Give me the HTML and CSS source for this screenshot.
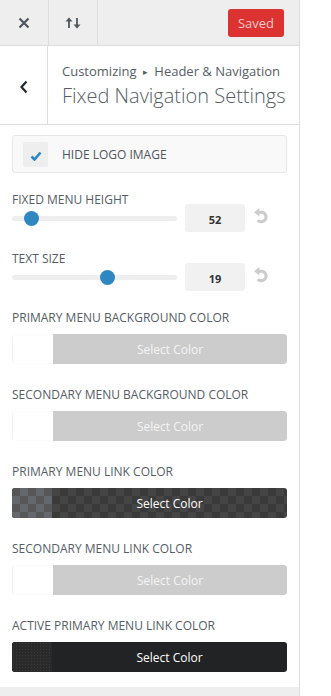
FILE: index.html
```html
<!DOCTYPE html>
<html lang="en">

<head>
    <meta charset="UTF-8">
    <meta name="viewport" content="width=device-width, initial-scale=1.0">
    <title>Fixed Navigation Settings</title>
    <link rel="stylesheet" href="styles.css">
</head>

<body>
    <div class="panel">
        <div class="topbar">
            <button class="icon-btn" title="Close">
                <svg width="12" height="12" viewBox="0 0 12 12"><path d="M1.5 1.5 L10.5 10.5 M10.5 1.5 L1.5 10.5" stroke="#50575e" stroke-width="2.2" fill="none"/></svg>
            </button>
            <button class="icon-btn" title="Reorder">
                <svg width="18" height="14" viewBox="0 0 18 14"><path d="M5 12 V2.5" stroke="#50575e" stroke-width="1.8" fill="none"/><path d="M1.5 5.5 L5 1.5 L8.5 5.5 Z" fill="#50575e"/><path d="M13 2 V11.5" stroke="#50575e" stroke-width="1.8" fill="none"/><path d="M9.5 8.5 L13 12.5 L16.5 8.5 Z" fill="#50575e"/></svg>
            </button>
            <button class="save-btn">Saved</button>
        </div>

        <div class="section-head">
            <button class="back-btn" title="Back">
                <svg width="10" height="14" viewBox="0 0 10 14"><path d="M7.5 1.5 L2.5 7 L7.5 12.5" stroke="#23282d" stroke-width="2.2" fill="none"/></svg>
            </button>
            <div class="section-title">
                <span class="crumbs">Customizing <span class="sep">&#9656;</span> Header &amp; Navigation</span>
                <h3>Fixed Navigation Settings</h3>
            </div>
        </div>

        <ul class="controls">
            <li class="control">
                <label class="checkbox-row">
                    <span class="checkbox">
                        <svg width="12" height="10" viewBox="0 0 12 10"><path d="M1.5 5.5 L4.5 8.5 L10.5 1.5" stroke="#2e86c1" stroke-width="2.6" fill="none"/></svg>
                    </span>
                    <span class="checkbox-label">Hide Logo Image</span>
                </label>
            </li>

            <li class="control">
                <span class="control-title">Fixed Menu Height</span>
                <div class="range-row">
                    <div class="track"><span class="thumb" style="left: 12px"></span></div>
                    <span class="range-value">52</span>
                    <span class="reset">
                        <svg width="17" height="17" viewBox="0 0 16 16"><path d="M5 4 H8.5 A4.5 4.5 0 1 1 4.5 11.5" stroke="#cccccc" stroke-width="3" fill="none"/><path d="M1 4 L6 0 L6 8 Z" fill="#cccccc"/></svg>
                    </span>
                </div>
            </li>

            <li class="control">
                <span class="control-title">Text Size</span>
                <div class="range-row">
                    <div class="track"><span class="thumb" style="left: 88px"></span></div>
                    <span class="range-value">19</span>
                    <span class="reset">
                        <svg width="17" height="17" viewBox="0 0 16 16"><path d="M5 4 H8.5 A4.5 4.5 0 1 1 4.5 11.5" stroke="#cccccc" stroke-width="3" fill="none"/><path d="M1 4 L6 0 L6 8 Z" fill="#cccccc"/></svg>
                    </span>
                </div>
            </li>

            <li class="control color-control">
                <span class="control-title">Primary Menu Background Color</span>
                <button class="color-btn empty"><span class="swatch"></span><span class="color-text">Select Color</span></button>
            </li>

            <li class="control color-control">
                <span class="control-title">Secondary Menu Background Color</span>
                <button class="color-btn empty"><span class="swatch"></span><span class="color-text">Select Color</span></button>
            </li>

            <li class="control color-control">
                <span class="control-title">Primary Menu Link Color</span>
                <button class="color-btn checker"><span class="swatch"></span><span class="color-text">Select Color</span></button>
            </li>

            <li class="control color-control">
                <span class="control-title">Secondary Menu Link Color</span>
                <button class="color-btn empty"><span class="swatch"></span><span class="color-text">Select Color</span></button>
            </li>

            <li class="control color-control">
                <span class="control-title">Active Primary Menu Link Color</span>
                <button class="color-btn dark"><span class="swatch"></span><span class="color-text">Select Color</span></button>
            </li>
        </ul>
    </div>
</body>
</html>
```

FILE: styles.css
```css
body {
    font-family: "Open Sans", Arial, sans-serif;
    margin: 0;
    padding: 0;
    background: #fff;
    color: #555d66;
}

button {
    font-family: inherit;
    border: 0;
    padding: 0;
    cursor: pointer;
}

.panel {
    width: 299px;
    height: 696px;
    border-right: 1px solid #ddd;
    background: #eee;
    display: flex;
    flex-direction: column;
    overflow: hidden;
}

/* top bar */
.topbar {
    height: 45px;
    flex-shrink: 0;
    display: flex;
    align-items: center;
    background: #eee;
    border-bottom: 1px solid #ddd;
}

.icon-btn {
    width: 49px;
    height: 45px;
    background: transparent;
    border-right: 1px solid #ddd;
    display: flex;
    align-items: center;
    justify-content: center;
}

.save-btn {
    margin-left: auto;
    margin-right: 15px;
    width: 56px;
    height: 28px;
    background: #dc3232;
    color: #f7c9c9;
    font-size: 13px;
    border-radius: 3px;
}

/* section header */
.section-head {
    height: 78px;
    flex-shrink: 0;
    display: flex;
    background: #fff;
    border-bottom: 1px solid #ddd;
}

.back-btn {
    width: 48px;
    background: #fff;
    border-right: 1px solid #ddd;
    display: flex;
    align-items: center;
    justify-content: center;
    padding-top: 3px;
}

.section-title {
    padding: 16px 0 0 14px;
    display: flex;
    flex-direction: column;
}

.crumbs {
    font-size: 13px;
    line-height: 18px;
    color: #555d66;
}

.crumbs .sep {
    font-size: 9px;
    margin: 0 3px;
    vertical-align: 1px;
}

.section-title h3 {
    margin: 2px 0 0;
    font-size: 20px;
    font-weight: 300;
    line-height: 26px;
    color: #555d66;
}

/* controls */
.controls {
    list-style: none;
    margin: 0;
    padding: 10px 12px 15px;
    background: #fff;
}

.control {
    margin-bottom: 19px;
}

.control:last-child {
    margin-bottom: 0;
}

.control-title {
    display: block;
    font-size: 12px;
    line-height: 16px;
    text-transform: uppercase;
    color: #555d66;
}

.checkbox-row {
    height: 36px;
    display: flex;
    align-items: center;
    padding-left: 10px;
    background: #f9f9f9;
    border: 1px solid #e8e8e8;
    border-radius: 3px;
}

.checkbox {
    width: 25px;
    height: 25px;
    background: #eee;
    border-radius: 2px;
    display: flex;
    align-items: center;
    justify-content: center;
    padding-top: 3px;
    box-sizing: border-box;
}

.checkbox-label {
    margin-left: 14px;
    font-size: 12px;
    text-transform: uppercase;
    color: #4f565d;
}

.range-row {
    display: flex;
    align-items: center;
    margin-top: -4px;
}

.track {
    position: relative;
    width: 165px;
    height: 5px;
    background: #eee;
    border-radius: 3px;
}

.thumb {
    position: absolute;
    top: -5px;
    width: 15px;
    height: 15px;
    border-radius: 50%;
    background: #2e87c1;
}

.range-value {
    width: 60px;
    height: 28px;
    margin-left: 8px;
    background: #f1f1f1;
    border-radius: 3px;
    font-size: 11px;
    font-weight: 700;
    color: #333;
    display: flex;
    align-items: center;
    justify-content: center;
    padding-top: 2px;
    box-sizing: border-box;
}

.reset {
    margin-left: 8px;
    display: flex;
    margin-top: -4px;
}

.color-control {
    margin-bottom: 23px;
}

.color-control .control-title {
    margin-bottom: 8px;
}

.color-btn {
    width: 275px;
    height: 30px;
    display: flex;
    border-radius: 3px;
    background: transparent;
    overflow: hidden;
}

.swatch {
    width: 40px;
    flex-shrink: 0;
}

.color-text {
    flex: 1;
    display: flex;
    align-items: center;
    justify-content: center;
    font-size: 12px;
    color: #fff;
}

.color-btn.empty .swatch {
    border: 1px solid #fbfbfb;
    border-left-color: #f1f1f1;
    border-right: 0;
    border-radius: 3px 0 0 3px;
}

.color-btn.empty .color-text {
    background: #ccc;
    border-radius: 0 3px 3px 0;
    color: #f4f4f4;
}

.color-btn.checker {
    background-color: #3a3a3a;
    background-image:
        linear-gradient(45deg, #454545 25%, transparent 25%, transparent 75%, #454545 75%),
        linear-gradient(45deg, #454545 25%, transparent 25%, transparent 75%, #454545 75%);
    background-size: 16px 16px;
    background-position: 0 0, 8px 8px;
}

.color-btn.checker .swatch {
    background-color: #555759;
    background-image:
        linear-gradient(45deg, #64676b 25%, transparent 25%, transparent 75%, #64676b 75%),
        linear-gradient(45deg, #64676b 25%, transparent 25%, transparent 75%, #64676b 75%);
    background-size: 16px 16px;
    background-position: 0 0, 8px 8px;
}

.color-btn.dark {
    background: #222325;
}

.color-btn.dark .swatch {
    background-color: #2a2a2b;
    background-image: radial-gradient(#3a3a3b 0.8px, transparent 0.9px);
    background-size: 3px 3px;
}
```
